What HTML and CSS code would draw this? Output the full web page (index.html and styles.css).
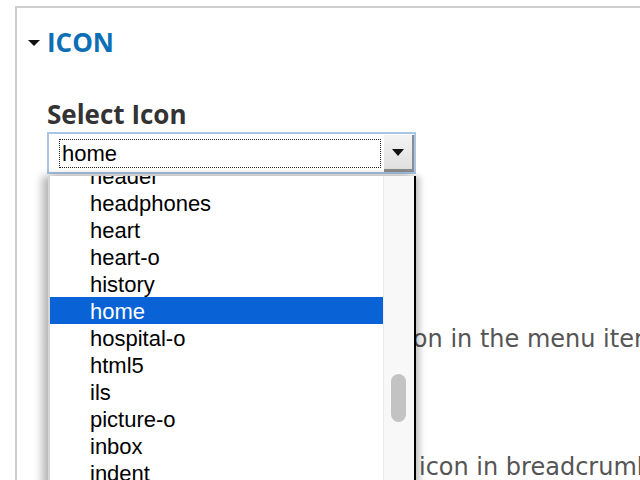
FILE: index.html
```html
<!DOCTYPE html>
<html>
<head>
<meta charset="utf-8">
<link rel="stylesheet" href="styles.css">
</head>
<body>
<div class="fieldset">
  <div class="legend">
    <span class="caret"></span>
    <span class="legend-text">ICON</span>
  </div>
  <div class="form-item">
    <div class="label">Select Icon</div>
    <div class="select">
      <div class="select-value"><span class="focus-ring">home</span></div>
      <div class="select-btn">
        <svg width="12" height="7" viewBox="0 0 12 7"><polygon points="0,0 12,0 6,7" fill="#111"/></svg>
      </div>
    </div>
  </div>
  <div class="desc desc-menu">Check this box to display an icon in the menu item.</div>
  <div class="desc desc-bread">Check this box if you want the icon in breadcrumb.</div>

  <div class="dropdown">
    <div class="options">
      <div class="option">header</div>
      <div class="option">headphones</div>
      <div class="option">heart</div>
      <div class="option">heart-o</div>
      <div class="option">history</div>
      <div class="option selected">home</div>
      <div class="option">hospital-o</div>
      <div class="option">html5</div>
      <div class="option">ils</div>
      <div class="option">picture-o</div>
      <div class="option">inbox</div>
      <div class="option">indent</div>
    </div>
    <div class="scrolltrack"><div class="thumb"></div></div>
  </div>
</div>
</body>
</html>
```

FILE: styles.css
```css
html, body {
  margin: 0;
  padding: 0;
  background: #fff;
  width: 640px;
  height: 480px;
  overflow: hidden;
}

.fieldset {
  position: relative;
  margin: 6px 0 0 15px;
  border-top: 2px solid #cdcdcd;
  border-left: 2px solid #cdcdcd;
  height: 472px;
  padding: 0 0 0 30px;
  overflow: hidden;
}

.legend {
  display: flex;
  align-items: center;
  margin-left: -19px;
  padding-top: 18px;
  height: 32px;
}

.caret {
  width: 0;
  height: 0;
  border-left: 6px solid transparent;
  border-right: 6px solid transparent;
  border-top: 6px solid #111;
  margin-right: 7px;
  margin-top: 1px;
}

.legend-text {
  font-family: "Open Sans", sans-serif;
  font-weight: 700;
  font-size: 26px;
  color: #0c6fb6;
  line-height: 32px;
}

.form-item {
  margin-top: 40px;
}

.label {
  font-family: "Open Sans", sans-serif;
  font-weight: 700;
  font-size: 26px;
  color: #333;
  line-height: 32px;
  margin-bottom: 2px;
}

.select {
  width: 365px;
  height: 38px;
  border: 2px solid #a9c5e5;
  display: flex;
  background: #fff;
}

.select-value {
  flex: 1;
  padding: 5px 3px 4px 10px;
  display: flex;
}

.focus-ring {
  flex: 1;
  border: 1px dotted #222;
  font-family: "Liberation Sans", Arial, sans-serif;
  font-size: 22px;
  line-height: 28px;
  padding-left: 2px;
  color: #000;
}

.select-btn {
  width: 30px;
  display: flex;
  align-items: center;
  justify-content: center;
  background: linear-gradient(#f3f3f3, #e0e0e0);
  border-right: 2px solid #8d8d8d;
  border-bottom: 3px solid #8d8d8d;
  box-sizing: border-box;
  margin-top: 1px;
}

.desc {
  font-family: "DejaVu Sans", Verdana, sans-serif;
  font-size: 24px;
  line-height: 28px;
  color: #555;
  white-space: nowrap;
}

.desc-menu {
  margin-top: 151px;
}

.desc-bread {
  margin-top: 100px;
}

.dropdown {
  position: absolute;
  left: 31px;
  top: 168px;
  width: 364px;
  height: 320px;
  display: flex;
  background: #fff;
  border-left: 2px solid #d6d6d6;
  border-right: 2px solid #000;
  box-shadow: -6px 0 8px rgba(0, 0, 0, 0.28), 4px 0 6px rgba(0, 0, 0, 0.22);
  overflow: hidden;
}

.options {
  flex: 1;
  margin-top: -14px;
}

.option {
  height: 27px;
  line-height: 27px;
  padding: 1px 0 0 40px;
  box-sizing: border-box;
  font-family: "Liberation Sans", Arial, sans-serif;
  font-size: 22px;
  color: #000;
}

.option.selected {
  background: #0a63d6;
  color: #fff;
}

.scrolltrack {
  width: 30px;
  background: #f8f8f8;
  border-left: 1px solid #ececec;
  position: relative;
}

.thumb {
  position: absolute;
  left: 7px;
  top: 198px;
  width: 15px;
  height: 48px;
  border-radius: 8px;
  background: #c3c3c3;
}
```
